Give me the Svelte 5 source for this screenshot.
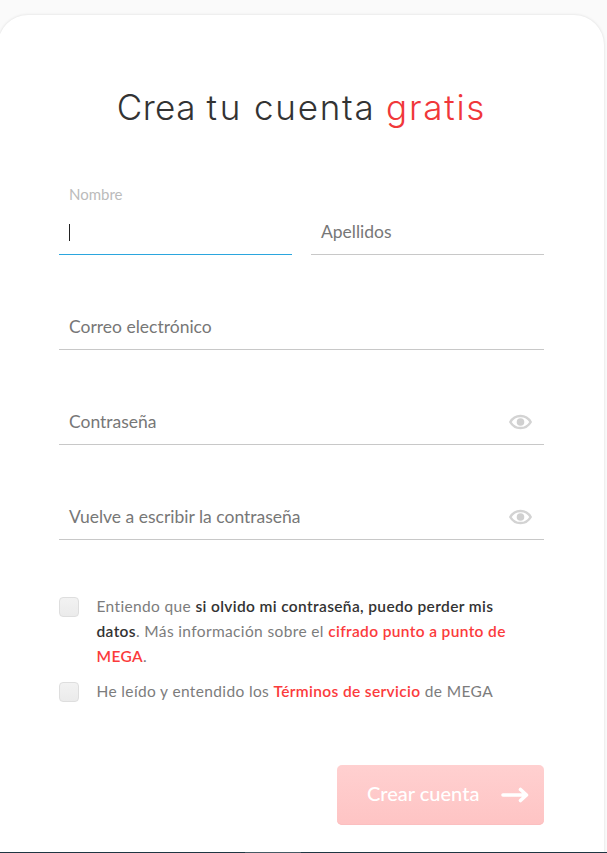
<script>

    let fields = [
        { id: "nombre", label: "Nombre", half: true },
        { id: "apellidos", label: "Apellidos", half: true },
        { id: "correo", label: "Correo electrónico" },
        { id: "clave", label: "Contraseña", secret: true },
        { id: "clave2", label: "Vuelve a escribir la contraseña", secret: true }
    ];

    // First field starts focused
    let activeField = "nombre";

    let olvido = false;
    let terminos = false;

</script>

<div class="page">
    <main class="card">
        <h1><span class="first">Crea</span> <span class="second">tu</span> cuenta <span class="red">gratis</span></h1>

        <div class="fields">
            {#each fields as field}
            <div class="field" class:half={field.half} class:active={field.id === activeField} on:click={() => { activeField = field.id }} role="presentation">
                <span class="label">{field.label}</span>
                {#if field.id === activeField}
                <span class="caret"></span>
                {/if}
                {#if field.secret}
                <svg class="eye" width="24" height="16" viewBox="0 0 24 16">
                    <path d="M2.3 8C4.7 3.8 8.3 1.9 12.5 1.9S20.3 3.8 22.7 8C20.3 12.2 16.7 14.1 12.5 14.1S4.7 12.2 2.3 8Z" fill="none" stroke="#d3d3d3" stroke-width="2.5" stroke-linejoin="round" />
                    <circle cx="12.5" cy="8" r="3.8" fill="#d0d0d0" />
                </svg>
                {/if}
            </div>
            {/each}
        </div>

        <div class="check">
            <button class="box" class:on={olvido} aria-label="Entiendo" on:click={() => { olvido = !olvido }}></button>
            <p>
                Entiendo que <strong>si olvido mi contraseña, puedo perder mis</strong><br>
                <strong>datos</strong>. Más información sobre el <b>cifrado punto a punto de</b><br>
                <b>MEGA</b>.
            </p>
        </div>
        <div class="check">
            <button class="box" class:on={terminos} aria-label="Términos" on:click={() => { terminos = !terminos }}></button>
            <p>He leído y entendido los <b>Términos de servicio</b> de MEGA</p>
        </div>

        <button class="submit">
            <span>Crear cuenta</span>
            <svg width="28" height="16" viewBox="0 0 28 16">
                <path d="M2 8H25M19.5 2.5L25.5 8L19.5 13.5" fill="none" stroke="#fff" stroke-width="3.6" stroke-linecap="round" stroke-linejoin="round" />
            </svg>
        </button>
    </main>
    <footer></footer>
</div>

<style>

    :global(body) {
        background: #fafafa;
        font-family: Lato, sans-serif;
    }

    .page {
        height: 853px;
        box-sizing: border-box;
        padding-top: 15px;
        display: flex;
        flex-direction: column;
        overflow: hidden;
    }

    .card {
        flex: 1;
        min-height: 0;
        box-sizing: border-box;
        width: 606px;
        margin-left: -2px;
        padding: 66px 60px 0 61px;
        background: #fff;
        border-radius: 30px 30px 0 0;
        box-shadow: 0 0 3px rgba(0, 0, 0, 0.13);
        display: flex;
        flex-direction: column;
    }

    h1 {
        margin: 0;
        text-align: center;
        font: 300 35px/52px Inter, sans-serif;
        letter-spacing: 1.75px;
        word-spacing: -1px;
        color: #333;
        white-space: nowrap;
    }

    .first {
        letter-spacing: 0.4px;
    }

    .second {
        letter-spacing: 3px;
    }

    .red {
        color: #f0373a;
    }

    .fields {
        display: flex;
        flex-wrap: wrap;
        column-gap: 19px;
        row-gap: 49px;
        margin-top: 76px;
    }

    .field {
        position: relative;
        width: 100%;
        height: 46px;
        box-sizing: border-box;
        padding: 0 12px 0 10px;
        border-bottom: 1px solid #c8c8c8;
        display: flex;
        align-items: center;
        justify-content: space-between;
        font-size: 17.5px;
        color: #777;
    }

    .field.half {
        width: 233px;
    }

    .field.active {
        border-color: #2ba6de;
    }

    .active .label {
        position: absolute;
        top: -25px;
        font-size: 15px;
        line-height: 20px;
        color: #bbb;
    }

    .caret {
        width: 1px;
        height: 17px;
        margin-top: 2px;
        background: #222;
    }

    .check {
        display: flex;
        gap: 17.5px;
        margin-top: 10px;
    }

    .fields + .check {
        margin-top: 54px;
    }

    .box {
        width: 20px;
        height: 20px;
        flex: none;
        margin-top: 3px;
        padding: 0;
        border: 1px solid #dedede;
        border-radius: 4px;
        background: linear-gradient(#f2f2f2, #ebebeb);
    }

    .box.on {
        background: #f0373a;
    }

    .check p {
        margin: 0;
        font-size: 15.5px;
        letter-spacing: 0.36px;
        line-height: 25px;
        color: #7c7c7c;
        white-space: nowrap;
    }

    .check strong {
        font-weight: 600;
        color: #333;
    }

    .check b {
        font-weight: 600;
        color: #fb3b3c;
    }

    .submit {
        align-self: flex-end;
        width: 207px;
        height: 60px;
        margin-top: 61px;
        padding: 0 15.5px 0 30px;
        border: none;
        border-radius: 5px;
        background: linear-gradient(#ffd0d0, #fec4c4);
        box-shadow: inset 0 -1px 0 #fbbfc0;
        display: flex;
        align-items: center;
        justify-content: space-between;
        color: #fff;
        font: 500 20px/24px Lato, sans-serif;
    }

    .submit span {
        padding-bottom: 4px;
    }

    footer {
        height: 1px;
        background: linear-gradient(to right, #1f3642 245px, #465a64 245px, #465a64 301px, #1f3642 301px);
    }

</style>
